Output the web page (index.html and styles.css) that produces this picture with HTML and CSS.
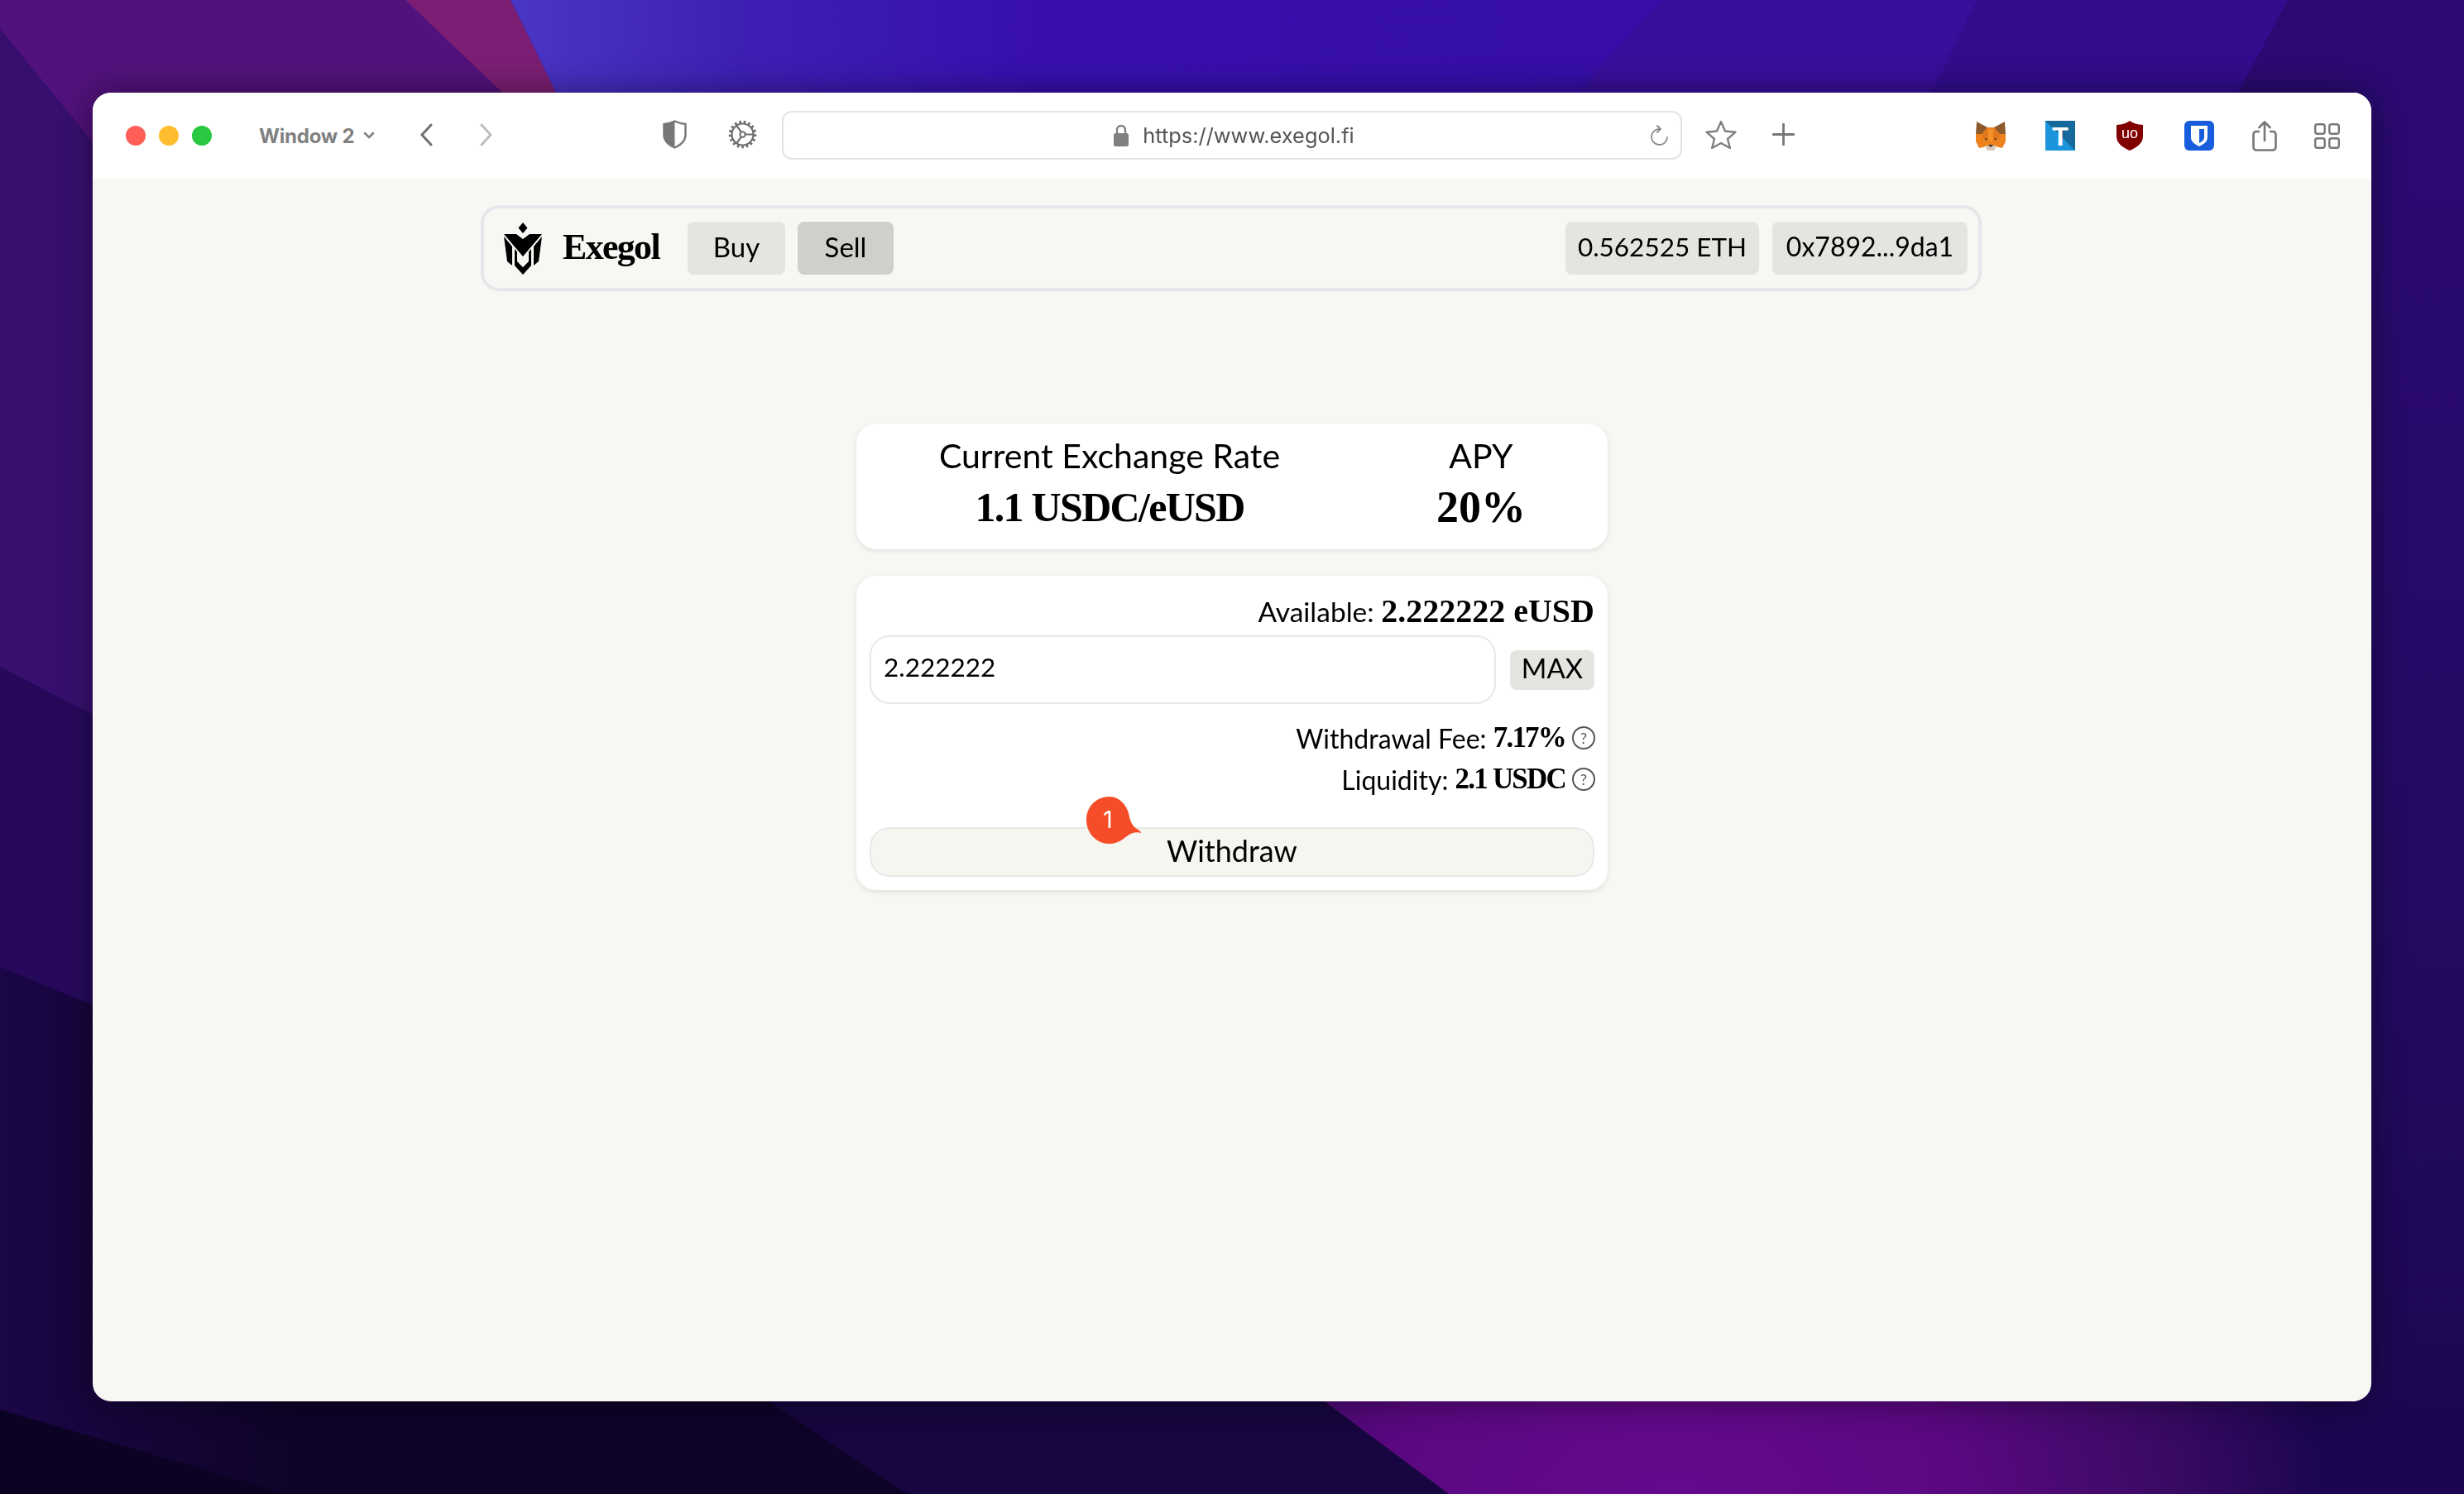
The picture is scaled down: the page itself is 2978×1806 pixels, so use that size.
FILE: index.html
```html
<!DOCTYPE html>
<html lang="en">
<head>
  <meta charset="UTF-8" />
  <title>Exegol</title>
  <link rel="stylesheet" href="styles.css">
</head>
<body>
  <svg class="wallpaper" viewBox="0 0 2978 1806" preserveAspectRatio="none">
    <defs>
      <linearGradient id="blueGlow" gradientUnits="userSpaceOnUse" x1="617" x2="2010" y1="0" y2="0">
        <stop offset="0" stop-color="#4a36c4"/>
        <stop offset="0.2" stop-color="#3e1fb4"/>
        <stop offset="0.45" stop-color="#380fae"/>
        <stop offset="1" stop-color="#360ea6"/>
      </linearGradient>
      <radialGradient id="magentaGlow" gradientUnits="userSpaceOnUse" cx="2020" cy="1880" r="790">
        <stop offset="0" stop-color="#660a90"/>
        <stop offset="0.45" stop-color="#5a0880"/>
        <stop offset="0.75" stop-color="#3c0a66"/>
        <stop offset="1" stop-color="#1c0650"/>
      </radialGradient>
      <linearGradient id="rightSide" x1="0" x2="0" y1="0" y2="1">
        <stop offset="0" stop-color="#2c0a74"/>
        <stop offset="0.6" stop-color="#240a62"/>
        <stop offset="1" stop-color="#1c0650"/>
      </linearGradient>
      <linearGradient id="darkBand" gradientUnits="userSpaceOnUse" x1="0" x2="350" y1="0" y2="0">
        <stop offset="0" stop-color="#1b0646"/>
        <stop offset="1" stop-color="#0f0329"/>
      </linearGradient>
    </defs>
    <rect width="2978" height="1806" fill="url(#rightSide)"/>
    <polygon points="617,0 2010,0 1907,112 1907,300 672,300 672,112" fill="url(#blueGlow)"/>
    <polygon points="2010,0 2390,0 2335,112 2335,300 1907,300 1907,112" fill="#370f9a"/>
    <polygon points="2390,0 2765,0 2705,112 2705,300 2335,300 2335,112" fill="#320c8c"/>
    <polygon points="0,0 490,0 607,112 607,300 112,300 112,172 0,35" fill="#52127c"/>
    <polygon points="490,0 617,0 672,112 672,300 607,300 607,112" fill="#7c1f74"/>
    <polygon points="0,35 112,172 112,864 0,806" fill="#37106f"/>
    <polygon points="0,806 112,864 112,1215 0,1169" fill="#27095c"/>
    <polygon points="0,1169 112,1215 930,1500 930,1694 1098,1806 348,1806 0,1704" fill="url(#darkBand)"/>
    <polygon points="0,1704 348,1806 0,1806" fill="#0b0224"/>
    <polygon points="930,1500 1601,1500 1601,1694 1751,1806 1098,1806 930,1694" fill="#17063f"/>
    <polygon points="1601,1694 2978,1694 2978,1806 1751,1806" fill="url(#magentaGlow)"/>
  </svg>

  <div class="window">
    <div class="toolbar">
      <span class="light light-red"></span>
      <span class="light light-yellow"></span>
      <span class="light light-green"></span>

      <span class="window-title">Window 2</span>
      <svg class="tb-chevron" width="14" height="10" viewBox="0 0 14 10"><path d="M2 2l5 5 5-5" fill="none" stroke="#808080" stroke-width="2.6" stroke-linecap="round" stroke-linejoin="round"/></svg>

      <svg class="tb-back" width="16" height="28" viewBox="0 0 16 28"><path d="M14 2L3 14l11 12" fill="none" stroke="#6f6f6f" stroke-width="3" stroke-linecap="round" stroke-linejoin="round"/></svg>
      <svg class="tb-forward" width="16" height="28" viewBox="0 0 16 28"><path d="M2 2l11 12L2 26" fill="none" stroke="#bdbdbd" stroke-width="3" stroke-linecap="round" stroke-linejoin="round"/></svg>

      <svg class="tb-shield" width="29" height="35" viewBox="0 0 29 35">
        <path d="M14.5 1.5C10 3.5 6 4.5 1.5 5v13c0 7 5 12 13 15.5 8-3.5 13-8.5 13-15.5V5c-4.5-.5-8.5-1.500-13-3.500z" fill="#fff" stroke="#777" stroke-width="2.4"/>
        <path d="M14.500 1.500C10 3.500 6 4.500 1.500 5v13c0 7 5 12 13 15.500z" fill="#777"/>
      </svg>
      <svg class="tb-gear" width="35" height="37" viewBox="0 0 35 37">
        <circle cx="17.500" cy="18.500" r="15" fill="none" stroke="#6e6e6e" stroke-width="3.600" stroke-dasharray="2.600 2.900"/>
        <circle cx="17.500" cy="18.500" r="13" fill="none" stroke="#6e6e6e" stroke-width="2.200"/>
        <circle cx="17.500" cy="18.500" r="3.200" fill="#fff" stroke="#6e6e6e" stroke-width="2"/>
        <path d="M20.700 18.500H30M15.900 15.700L10 7.500M15.900 21.300L10 29.500" stroke="#6e6e6e" stroke-width="2.200" fill="none"/>
      </svg>

      <div class="address-bar">
        <span></span>
        <div class="address">
          <svg width="18" height="27" viewBox="0 0 18 27"><path d="M4 12V7a5 5 0 0 1 10 0v5" fill="none" stroke="#808080" stroke-width="2.400"/><rect y="11" width="18" height="16" rx="2.500" fill="#808080"/></svg>
          <span class="url">https://www.exegol.fi</span>
        </div>
        <svg class="reload" width="22" height="25" viewBox="0 0 22 25"><path d="M20 15A9.500 9.500 0 1 1 11 5" fill="none" stroke="#8a8a8a" stroke-width="1.800" stroke-linecap="round"/><path d="M8 1l4 4-4 4" fill="none" stroke="#8a8a8a" stroke-width="1.800" stroke-linecap="round" stroke-linejoin="round"/></svg>
      </div>

      <svg class="tb-star" width="38" height="35" viewBox="0 0 38 35"><path d="M19 2l5 11.500 12.500 1.200-9.500 8.300 2.900 11-10.900-6-10.900 6L11 23 1.500 14.700 14 13.500z" fill="none" stroke="#808080" stroke-width="2.400" stroke-linejoin="round"/></svg>
      <svg class="tb-plus" width="27" height="27" viewBox="0 0 27 27"><path d="M13.500 1v25M1 13.500h25" stroke="#777" stroke-width="2.800" stroke-linecap="round"/></svg>

      <svg class="tb-fox" width="36" height="35" viewBox="0 0 36 35">
        <polygon points="1,0 14,7 22,7 35,0 36,15 29,18 7,18 0,15" fill="#8e5a2c"/>
        <polygon points="7,15 14,7 22,7 29,15 36,15 36,24 32,32 23,30 13,30 4,32 0,24 0,15" fill="#ee831d"/>
        <polygon points="7,15 14,8 15,20 9,21" fill="#e2761b"/>
        <polygon points="29,15 22,8 21,20 27,21" fill="#e2761b"/>
        <polygon points="15,10 21,10 20,24 16,24" fill="#f6902a"/>
        <polygon points="11,20 14,21 12,23" fill="#2b2b33"/>
        <polygon points="25,20 22,21 24,23" fill="#2b2b33"/>
        <polygon points="11,29 25,29 22,35 14,35" fill="#d9c6b6"/>
        <polygon points="15,28 21,28 18,31" fill="#2b2b33"/>
      </svg>
      <svg class="tb-ext-t" width="36" height="36" viewBox="0 0 36 36">
        <rect width="36" height="36" fill="#1b94dc"/>
        <polygon points="0,0 36,0 36,36" fill="#156a9b"/>
        <text x="18" y="30" text-anchor="middle" class="ext-t-letter">T</text>
      </svg>
      <svg class="tb-ublock" width="32" height="36" viewBox="0 0 32 36">
        <path d="M16 0c4 3 9 4.500 16 5v14c0 8-7 13-16 17C7 32 0 27 0 19V5c7-.5 12-2 16-5z" fill="#800000"/>
        <text x="16" y="21" text-anchor="middle" class="ext-ub-letters">uo</text>
      </svg>
      <svg class="tb-bitwarden" width="36" height="36" viewBox="0 0 36 36">
        <rect width="36" height="36" rx="6" fill="#175ddc"/>
        <path d="M8 6h20v14c0 5-4 8-10 11C12 28 8 25 8 20z" fill="#fff"/>
        <path d="M18 10h6v10c0 3-2.500 5-6 7z" fill="#175ddc"/>
      </svg>
      <svg class="tb-share" width="30" height="37" viewBox="0 0 30 37">
        <path d="M9 13H5a3.500 3.500 0 0 0-3.500 3.500V32A3.500 3.500 0 0 0 5 35.500h20a3.500 3.500 0 0 0 3.500-3.500V16.500A3.500 3.500 0 0 0 25 13h-4" fill="none" stroke="#777" stroke-width="2.600"/>
        <path d="M15 24V2M8.500 8L15 1.500 21.500 8" fill="none" stroke="#777" stroke-width="2.600" stroke-linecap="round" stroke-linejoin="round"/>
      </svg>
      <svg class="tb-grid" width="31" height="31" viewBox="0 0 31 31">
        <g fill="none" stroke="#777" stroke-width="2.400">
          <rect x="1.200" y="1.200" width="11.500" height="11.500" rx="2.500"/>
          <rect x="18.300" y="1.200" width="11.500" height="11.500" rx="2.500"/>
          <rect x="1.200" y="18.300" width="11.500" height="11.500" rx="2.500"/>
          <rect x="18.300" y="18.300" width="11.500" height="11.500" rx="2.500"/>
        </g>
      </svg>
    </div>

    <div class="page">
      <nav class="navbar">
        <svg class="logo-mark" width="46" height="63" viewBox="0 0 46 63">
          <polygon points="23,0 28.500,6.500 23,13 17.500,6.500"/>
          <polygon points="0,14 15,14 23,20 31,14 46,14 23,41"/>
          <polygon points="0,17 10,29 10,52 4,47"/>
          <polygon points="46,17 36,29 36,52 42,47"/>
          <polygon points="13,32 16,35.500 16,47 23,54 30,47 30,35.500 33,32 33,52 23,63 13,52"/>
        </svg>
        <span class="logo-text">Exegol</span>
        <a class="nav-btn nav-buy">Buy</a>
        <a class="nav-btn nav-sell">Sell</a>
        <span class="nav-spacer"></span>
        <span class="nav-btn nav-eth">0.562525 ETH</span>
        <span class="nav-btn nav-addr">0x7892...9da1</span>
      </nav>

      <section class="card rate-card">
        <div class="rate-col">
          <div class="rate-label">Current Exchange Rate</div>
          <div class="rate-value">1.1 USDC/eUSD</div>
        </div>
        <div class="rate-col">
          <div class="rate-label">APY</div>
          <div class="rate-value rate-apy">20%</div>
        </div>
      </section>

      <section class="card sell-card">
        <div class="available">Available: <strong>2.222222 eUSD</strong></div>
        <div class="amount-row">
          <div class="amount-input">2.222222</div>
          <span class="max-btn">MAX</span>
        </div>
        <div class="info-row fee-row">Withdrawal Fee:&nbsp;<strong>7.17%</strong><span class="help">?</span></div>
        <div class="info-row">Liquidity:&nbsp;<strong>2.1 USDC</strong><span class="help">?</span></div>
        <div class="withdraw-btn">
          Withdraw
          <div class="badge">
            <svg width="66" height="57" viewBox="0 0 66 57"><path d="M28 0c13 0 22 12 24 24 1 6 4 12 9 15 3 2 5 3 5 5-8-2-13 1-20 6-5 4-11 7-18 7C12 57 0 44 0 28S12 0 28 0z" fill="#f54d27"/></svg>
            <span class="badge-num">1</span>
          </div>
        </div>
      </section>
    </div>
  </div>
</body>
</html>
```

FILE: styles.css
```css
* {
  box-sizing: border-box;
}
html, body {
  margin: 0;
  height: 100%;
}
body {
  padding: 112px;
  background-color: #1c0650;
  font-family: Lato, "Noto Sans", sans-serif;
  color: #000;
}
.wallpaper {
  position: fixed;
  left: 0;
  top: 0;
  width: 100%;
  height: 100%;
}
.window {
  position: relative;
  height: 1582px;
  border-radius: 22px;
  overflow: hidden;
  background-color: #f7f7f3;
  box-shadow: 0 0 40px rgba(0, 0, 0, 0.45);
}

/* browser toolbar */
.toolbar {
  display: flex;
  align-items: center;
  height: 104px;
  padding-left: 40px;
  background-color: #fff;
}
.light {
  width: 24px;
  height: 24px;
  border-radius: 50%;
  margin-right: 16px;
}
.light-red { background-color: #ff5f57; }
.light-yellow { background-color: #febc2e; }
.light-green { background-color: #28c840; margin-right: 0; }
.window-title {
  width: 118px;
  margin-left: 57px;
  font-family: Inter, sans-serif;
  font-size: 24px;
  font-weight: 700;
  letter-spacing: -0.2px;
  white-space: nowrap;
  color: #808080;
}
.tb-chevron { margin-left: 8px; }
.tb-back { margin-left: 54px; margin-top: -2px; }
.tb-forward { margin-left: 57px; margin-top: -2px; }
.tb-shield { margin-left: 205px; margin-top: -3px; }
.tb-gear { margin-left: 50px; margin-top: -3px; }
.address-bar {
  display: grid;
  grid-template-columns: 1fr auto 1fr;
  align-items: center;
  width: 1088px;
  height: 59px;
  margin-left: 30px;
  margin-top: -1px;
  padding-left: 5px;
  border: 2px solid #e3e3e6;
  border-radius: 12px;
}
.address {
  display: flex;
  align-items: center;
  gap: 17px;
}
.url {
  font-family: Inter, sans-serif;
  font-size: 25.4px;
  color: #555;
}
.reload {
  justify-self: end;
  margin-right: 14px;
}
.tb-star { margin-left: 28px; margin-top: -4px; }
.tb-plus { margin-left: 43px; margin-top: -3px; }
.tb-fox { margin-left: 219px; }
.tb-ext-t { margin-left: 48px; }
.tb-ublock { margin-left: 50px; }
.tb-bitwarden { margin-left: 50px; }
.tb-share { margin-left: 46px; }
.tb-grid { margin-left: 45px; }
.ext-t-letter {
  font-family: "Liberation Sans", sans-serif;
  font-size: 32px;
  font-weight: 700;
  fill: #fff;
}
.ext-ub-letters {
  font-family: "Liberation Sans", sans-serif;
  font-size: 18px;
  fill: #fff;
}

/* page */
.page {
  display: flex;
  flex-direction: column;
  align-items: center;
  padding-top: 32px;
}
.navbar {
  display: flex;
  align-items: center;
  width: 1814px;
  height: 104px;
  margin-right: 2px;
  padding: 0 13px 0 24px;
  border: 4px solid #e6e6eb;
  border-radius: 22px;
}
.logo-mark {
  flex: none;
  fill: #000;
}
.logo-text {
  width: 115px;
  margin-left: 25px;
  margin-right: 36px;
  padding-bottom: 3px;
  font-family: "Liberation Serif", serif;
  font-size: 44px;
  font-weight: 700;
  letter-spacing: -1.7px;
}
.nav-btn {
  display: flex;
  align-items: center;
  justify-content: center;
  height: 64px;
  padding-bottom: 5px;
  border-radius: 8px;
  background-color: #e5e4e1;
  font-size: 33px;
  white-space: nowrap;
}
.nav-buy { width: 118px; margin-right: 15px; }
.nav-sell { width: 116px; background-color: #d0d0cb; }
.nav-spacer { flex: 1; }
.nav-eth { width: 234px; margin-right: 16px; font-size: 31.5px; }
.nav-addr { width: 236px; font-size: 32px; }

.card {
  width: 908px;
  border-radius: 24px;
  background-color: #fff;
  box-shadow: 0 2px 6px rgba(0, 0, 0, 0.1);
}
.rate-card {
  display: grid;
  grid-template-columns: 612px 286px;
  height: 152px;
  margin-top: 160px;
  padding-top: 14px;
  text-align: center;
}
.rate-label {
  font-size: 41px;
  line-height: 50px;
}
.rate-value {
  margin-top: 9px;
  font-family: "Liberation Serif", serif;
  font-size: 50px;
  font-weight: 700;
  letter-spacing: -1.7px;
  line-height: 56px;
}
.rate-apy {
  font-size: 54px;
  letter-spacing: 0;
}
.sell-card {
  position: relative;
  height: 380px;
  margin-top: 32px;
  padding: 22px 16px 0;
}
.available {
  text-align: right;
  font-size: 33.5px;
  line-height: 42px;
}
.available strong {
  font-family: "Liberation Serif", serif;
  font-weight: 700;
  font-size: 40px;
}
.amount-row {
  display: flex;
  align-items: center;
  gap: 17px;
  margin-top: 8px;
}
.amount-input {
  flex: 1;
  height: 83px;
  padding: 0 15px;
  border: 2px solid #e8e8ec;
  border-radius: 24px;
  font-size: 31.5px;
  line-height: 72px;
}
.max-btn {
  display: flex;
  align-items: center;
  justify-content: center;
  width: 102px;
  height: 48px;
  padding-bottom: 5px;
  border-radius: 8px;
  background-color: #e5e4e1;
  font-size: 33px;
}
.info-row {
  display: flex;
  align-items: center;
  justify-content: flex-end;
  height: 50px;
  margin-right: -1px;
  font-size: 32px;
}
.fee-row { margin-top: 16px; }
.info-row strong {
  font-family: "Liberation Serif", serif;
  font-weight: 700;
  font-size: 35px;
  letter-spacing: -1.8px;
}
.help {
  display: flex;
  align-items: center;
  justify-content: center;
  width: 28px;
  height: 28px;
  margin-left: 8px;
  border: 2px solid #555;
  border-radius: 50%;
  font-size: 18px;
  color: #555;
}
.withdraw-btn {
  position: relative;
  display: flex;
  align-items: center;
  justify-content: center;
  height: 60px;
  margin-top: 33px;
  padding-bottom: 4px;
  border: 2px solid #e8e8e8;
  border-radius: 24px;
  background-color: #f6f6f1;
  font-size: 36px;
}
.badge {
  position: absolute;
  left: 260px;
  top: -39px;
  width: 66px;
  height: 57px;
}
.badge svg {
  display: block;
}
.badge-num {
  position: absolute;
  left: 0;
  top: 0;
  width: 52px;
  text-align: center;
  font-family: Inter, sans-serif;
  font-size: 28px;
  line-height: 57px;
  color: #fff;
}
```
